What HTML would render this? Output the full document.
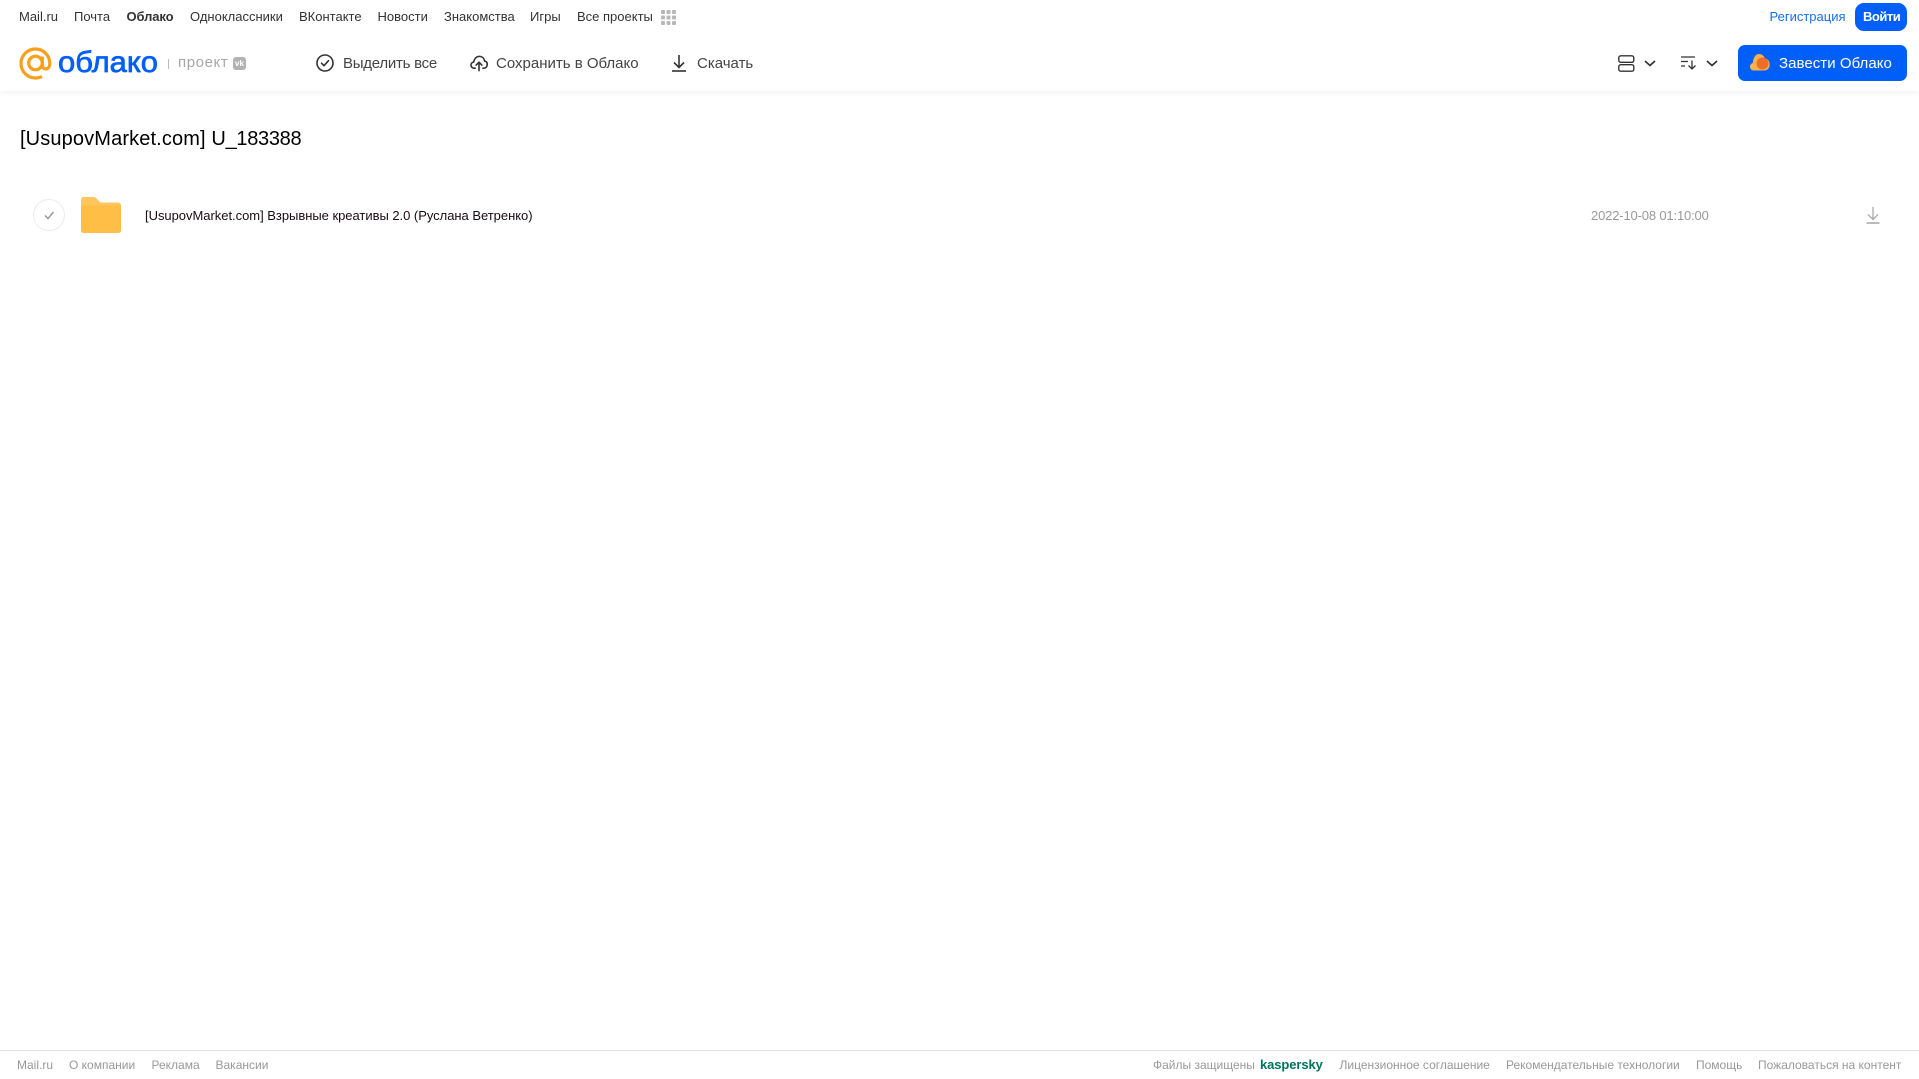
<!DOCTYPE html>
<html lang="ru">
<head>
<meta charset="utf-8">
<title>Облако</title>
<style>
html,body{margin:0;padding:0;background:#fff;}
body{width:1919px;height:1079px;position:relative;overflow:hidden;font-family:"Liberation Sans",Arial,sans-serif;color:#333;}
.t{position:absolute;white-space:nowrap;line-height:20px;}
.n{top:7px;font-size:13px;color:#333;}
.a{top:53.500px;font-size:15px;color:#444;}
.f{top:1055px;font-size:12px;color:#999;}
svg{position:absolute;overflow:visible;}
#hd{position:absolute;left:0;top:0;width:1919px;height:91px;background:#fff;box-shadow:0 1px 6px rgba(0,0,0,.07);}
</style>
</head>
<body>
<div id="hd"></div>

<span class="t n" style="left:19px">Mail.ru</span>
<span class="t n" style="left:74px">Почта</span>
<span class="t n" style="left:126.500px;font-weight:bold;letter-spacing:-.1px">Облако</span>
<span class="t n" style="left:190px">Одноклассники</span>
<span class="t n" style="left:299px">ВКонтакте</span>
<span class="t n" style="left:377.500px">Новости</span>
<span class="t n" style="left:444px">Знакомства</span>
<span class="t n" style="left:530px">Игры</span>
<span class="t n" style="left:577px">Все проекты</span>
<svg style="left:661px;top:10px" width="15" height="15" viewBox="0 0 15 15" fill="#b8b8b8">
<rect x="0" y="0" width="4" height="4" rx="1"/><rect x="5.500" y="0" width="4" height="4" rx="1"/><rect x="11" y="0" width="4" height="4" rx="1"/>
<rect x="0" y="5.500" width="4" height="4" rx="1"/><rect x="5.500" y="5.500" width="4" height="4" rx="1"/><rect x="11" y="5.500" width="4" height="4" rx="1"/>
<rect x="0" y="11" width="4" height="4" rx="1"/><rect x="5.500" y="11" width="4" height="4" rx="1"/><rect x="11" y="11" width="4" height="4" rx="1"/>
</svg>

<span class="t n" style="left:1769.500px;color:#1a6fe8">Регистрация</span>
<div style="position:absolute;left:1855px;top:3px;width:52px;height:28px;border-radius:9px;background:#005ff9"></div>
<span class="t n" style="left:1863px;color:#fff;font-weight:bold;letter-spacing:-.5px">Войти</span>

<!-- logo -->
<svg style="left:19px;top:47px" width="33" height="33" viewBox="0 0 33 33" fill="none" stroke="#f9a01b" stroke-width="3.200">
<circle cx="16.500" cy="16" r="6.800"/>
<path d="M23.300 9.500v8.500c0 5.500 7.500 5.500 7.500-1.500C30.800 8 24 2 16.500 2 8.500 2 2 8.500 2 16.500 2 24.500 8.500 31 16.500 31c2.500 0 4.500-.5 6.500-1.500"/>
</svg>
<svg style="left:56px;top:40px" width="110" height="44">
<text x="2" y="32" font-family="Liberation Sans, sans-serif" font-size="30" fill="#005ff9" stroke="#005ff9" stroke-width=".7" textLength="100" lengthAdjust="spacingAndGlyphs">облако</text>
</svg>
<div style="position:absolute;left:168px;top:59px;width:1px;height:10px;background:#bbb"></div>
<span class="t" style="left:178px;top:53px;font-size:15px;color:#a8a8a8;letter-spacing:.6px">проект</span>
<div style="position:absolute;left:233px;top:57px;width:13px;height:13px;border-radius:3px;background:#b3b3b3;color:#fff;font-size:8px;font-weight:bold;line-height:13px;text-align:center">vk</div>

<!-- actions -->
<svg style="left:316px;top:54px" width="18" height="18" viewBox="0 0 18 18" fill="none" stroke="#333" stroke-width="1.600">
<circle cx="9" cy="9" r="8"/><path d="M5.500 9.200l2.500 2.500 4.500-5" stroke-linecap="round" stroke-linejoin="round"/>
</svg>
<span class="t a" style="left:343px;letter-spacing:-.25px">Выделить все</span>

<svg style="left:469.500px;top:54px" width="18" height="18" viewBox="0 0 19 18" fill="none" stroke="#333" stroke-width="1.700" stroke-linecap="round" stroke-linejoin="round">
<path d="M5.500 14.500H4.500C2.500 14.500 1 13 1 11.200c0-1.700 1.300-3 2.900-3.200C4.300 5 6.500 2 9.800 2c3 0 5.200 2 5.600 5 1.900.3 2.800 1.900 2.800 3.500 0 2.200-1.500 4-3.500 4h-1"/>
<path d="M9.500 17V8.500M6.500 11.200l3-3 3 3"/>
</svg>
<span class="t a" style="left:496px">Сохранить в Облако</span>

<svg style="left:672px;top:54px" width="14" height="18" viewBox="0 0 14 18" fill="none" stroke="#333" stroke-width="1.600">
<path d="M7 1v12M2 8.500l5 5 5-5"/><path d="M0 17h14"/>
</svg>
<span class="t a" style="left:697px">Скачать</span>

<!-- view toggles -->
<svg style="left:1618px;top:55px" width="17" height="17" viewBox="0 0 17 17" fill="none" stroke="#333" stroke-width="1.400">
<rect x=".8" y=".8" width="15" height="6.500" rx="2"/><rect x=".8" y="9.700" width="15" height="6.500" rx="2"/>
</svg>
<svg style="left:1644px;top:60px" width="12" height="7" viewBox="0 0 12 7" fill="none" stroke="#333" stroke-width="1.700"><path d="M1 1l5 4.500L11 1"/></svg>
<svg style="left:1681px;top:56px" width="16" height="14" viewBox="0 0 16 14" fill="none" stroke="#333" stroke-width="1.300">
<path d="M0 1h14M0 5.500h7M0 10h4"/><path d="M11 4.500V13M7.500 9.500l3.500 3.500 3.500-3.500"/>
</svg>
<svg style="left:1706px;top:60px" width="12" height="7" viewBox="0 0 12 7" fill="none" stroke="#333" stroke-width="1.700"><path d="M1 1l5 4.500L11 1"/></svg>

<div style="position:absolute;left:1738px;top:45px;width:169px;height:36px;border-radius:7px;background:#005ff9"></div>
<svg style="left:1750px;top:54px" width="20" height="17" viewBox="0 0 20 17">
<path d="M4 16.500C1.500 16.500 0 14.700 0 12.700c0-1.800 1.100-3.200 2.800-3.700C3 4 5.500 0 9 0c3 0 5 2 6 4.500 2.800.2 4.700 2.800 4.700 6 0 3.300-2.200 6-5.200 6z" fill="#f9b14a"/>
<circle cx="12.500" cy="9.500" r="6" fill="#ee6d2b"/>
</svg>
<span class="t" style="left:1779px;top:53.500px;font-size:15px;color:#fff;letter-spacing:.05px">Завести Облако</span>

<!-- title -->
<span class="t" style="left:20px;top:127px;font-size:20px;line-height:24px;color:#000;letter-spacing:.13px">[UsupovMarket.com] <span style="letter-spacing:-.3px">U_183388</span></span>

<!-- row -->
<svg style="left:33px;top:199px" width="32" height="32" viewBox="0 0 32 32" fill="none">
<circle cx="16" cy="16" r="15.500" stroke="#ececec"/>
<path d="M12 16.500l3 3 5.500-6.500" stroke="#999" stroke-width="1.500"/>
</svg>
<svg style="left:81px;top:197px" width="40" height="36" viewBox="0 0 40 36">
<path d="M0 3C0 1.300 1.300 0 3 0h9c1.800 0 2.800.7 4 2l3.500 3.500H37c1.700 0 3 1.300 3 3V33c0 1.700-1.300 3-3 3H3c-1.700 0-3-1.300-3-3z" fill="#ffc560"/>
<path d="M0 8.500h40V33c0 1.700-1.300 3-3 3H3c-1.700 0-3-1.300-3-3z" fill="#ffbe46"/>
</svg>
<span class="t" style="left:145px;top:206px;font-size:13px;color:#1a0a14;letter-spacing:-.03px">[UsupovMarket.com] Взрывные креативы 2.0 (Руслана Ветренко)</span>
<span class="t" style="left:1591px;top:206px;font-size:13px;color:#999;letter-spacing:-.16px">2022-10-08 01:10:00</span>
<svg style="left:1866px;top:207px" width="14" height="17" viewBox="0 0 14 17" fill="none" stroke="#aaa" stroke-width="1.300">
<path d="M7 0v12M2 7.500l5 5 5-5"/><path d="M.5 16h13" stroke-width="1.600"/>
</svg>

<!-- footer -->
<div style="position:absolute;left:0;top:1050px;width:1919px;height:1px;background:#ddd"></div>
<span class="t f" style="left:17px">Mail.ru</span>
<span class="t f" style="left:69px">О компании</span>
<span class="t f" style="left:151.500px">Реклама</span>
<span class="t f" style="left:215.500px">Вакансии</span>
<span class="t f" style="left:1153px">Файлы защищены</span>
<span class="t f" style="left:1260px;color:#00735c;font-weight:bold;font-size:13px;letter-spacing:-.1px">kaspersky</span>
<span class="t f" style="left:1339.500px">Лицензионное соглашение</span>
<span class="t f" style="left:1506px">Рекомендательные технологии</span>
<span class="t f" style="left:1696px">Помощь</span>
<span class="t f" style="left:1758px">Пожаловаться на контент</span>
</body>
</html>
